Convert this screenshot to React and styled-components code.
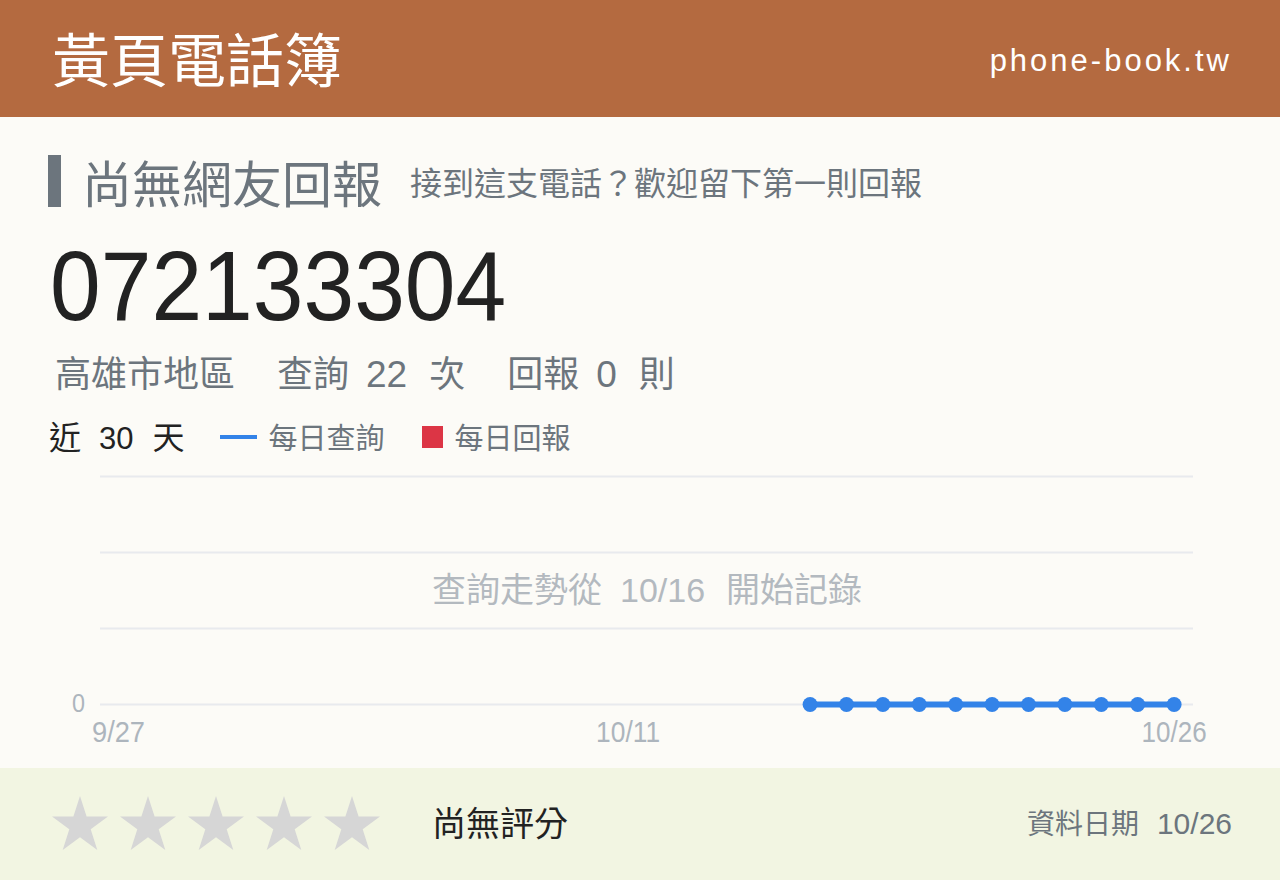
import styled, { createGlobalStyle } from 'styled-components';

const GlobalStyle = createGlobalStyle`
    html, body {
        margin: 0;
        padding: 0;
        background: #fcfbf7;
    }
    body {
        font-family: "Noto Sans CJK TC", "Liberation Sans", sans-serif;
        color: #222;
    }
`;

const Page = styled.div`
    width: 1280px;
    height: 880px;
    display: flex;
    flex-direction: column;
    overflow: hidden;
`;

const Header = styled.header`
    height: 117px;
    flex-shrink: 0;
    background: #b46a40;
    color: #fff;
    display: flex;
    align-items: center;
    justify-content: space-between;
    padding: 0 48px 0 52px;
    box-sizing: border-box;
`;

const Brand = styled.div`
    font-size: 58px;
    line-height: 1;
    margin-top: -3px;
`;

const Domain = styled.div`
    font-family: "Liberation Sans", Arial, sans-serif;
    font-size: 31px;
    letter-spacing: 3px;
    margin-top: 4px;
`;

const Main = styled.main`
    flex: 1;
    min-height: 0;
    padding: 38px 48px 0;
    display: flex;
    flex-direction: column;
`;

const TitleRow = styled.div`
    display: flex;
    align-items: center;
    color: #6c757d;
`;

const TitleBar = styled.span`
    width: 13px;
    height: 52px;
    background: #6c757d;
`;

const Title = styled.h1`
    margin: 0 0 0 21px;
    font-size: 50px;
    font-weight: 400;
    line-height: 1;
`;

const TitleNote = styled.span`
    margin-left: 28px;
    font-size: 32px;
    line-height: 1;
`;

// phone number digits are set a little narrower than the stock face
const Number = styled.div`
    margin-top: 30px;
    font-family: "Liberation Sans", Arial, sans-serif;
    font-size: 98px;
    line-height: 1;
    color: #222;
    transform: scaleX(0.93);
    transform-origin: left center;
    margin-left: 2px;
`;

const Stats = styled.div`
    margin-top: 18px;
    display: flex;
    gap: 42px;
    color: #6c757d;
    font-size: 36px;
    line-height: 1;
    padding-left: 7px;
`;

const Stat = styled.span`
    display: flex;
    align-items: baseline;
`;

const Count = styled.span`
    font-family: "Liberation Sans", Arial, sans-serif;
    font-size: 37px;
    padding: 0 22px 0 17px;
`;

const LegendRow = styled.div`
    margin-top: 26px;
    display: flex;
    align-items: center;
    line-height: 1;
`;

const Period = styled.span`
    display: flex;
    align-items: baseline;
    color: #222;
    font-size: 32px;
    margin-left: 1px;
    margin-right: 35px;
`;

const PeriodNum = styled.span`
    font-family: "Liberation Sans", Arial, sans-serif;
    font-size: 31px;
    padding: 0 19px 0 18px;
`;

const LegendItem = styled.span`
    display: flex;
    align-items: center;
    color: #6c757d;
    font-size: 29px;
    margin-right: 37px;
`;

const Swatch = styled.span`
    display: inline-block;
    width: ${p => (p.$line ? '37px' : '21px')};
    height: ${p => (p.$line ? '4px' : '22px')};
    background: ${p => p.$color};
    margin-right: 12px;
`;

const ChartBox = styled.div`
    margin: 12px 0 0 -48px;
    line-height: 0;
`;

const Footer = styled.footer`
    height: 112px;
    flex-shrink: 0;
    background: #f2f5e2;
    display: flex;
    align-items: center;
    padding: 0 48px 5px 52px;
    box-sizing: border-box;
`;

const Stars = styled.div`
    display: flex;
    gap: 12px;
    margin-top: 2px;
`;

const Rating = styled.span`
    margin-left: 52px;
    font-size: 34px;
    color: #222;
`;

const DataDate = styled.div`
    margin-left: auto;
    color: #6c757d;
    font-size: 28px;
    display: flex;
    align-items: baseline;
`;

const DateNum = styled.span`
    font-family: "Liberation Sans", Arial, sans-serif;
    font-size: 30px;
    margin-left: 18px;
`;

const Star = () => (
    <svg width="56" height="54" viewBox="0 0 56 54">
        <path d="M28 0 L34.6 20.5 L56 20.6 L38.7 33.3 L45.3 54 L28 41.3 L10.7 54 L17.3 33.3 L0 20.6 L21.4 20.5 Z" fill="#d6d6d6" />
    </svg>
);

const LABEL_FONT = 'Liberation Sans, Arial, sans-serif';

// x positions of the 30 days, 9/27 .. 10/26
const dayX = (i) => 118.5 + i * 36.4;
const recorded = Array.from({length: 11}, (_, i) => dayX(19 + i));

const axisLabels = [
    {day: 0, text: '9/27', width: 53},
    {day: 14, text: '10/11', width: 64},
    {day: 29, text: '10/26', width: 65},
];

const TrendChart = () => (
    <svg width="1280" height="282" viewBox="0 466 1280 282">
        {[476, 552, 628, 704].map(y => (
            <line key={y} x1="100" x2="1193" y1={y + 0.5} y2={y + 0.5} stroke="#e8eaee" strokeWidth="2" />
        ))}
        <text x="72" y="712" fontSize="26" fill="#adb5bd" fontFamily={LABEL_FONT}
              textLength="13" lengthAdjust="spacingAndGlyphs">0</text>
        {axisLabels.map(({day, text, width}) => (
            <text key={text} x={dayX(day) - width / 2} y="742" fontSize="30" fill="#adb5bd"
                  fontFamily={LABEL_FONT} textLength={width} lengthAdjust="spacingAndGlyphs">{text}</text>
        ))}
        <text x="432" y="602" fontSize="34" fill="#b3b9bf" fontFamily="Noto Sans CJK TC, sans-serif">
            查詢走勢從
            <tspan x="620" fontFamily={LABEL_FONT}>10/16</tspan>
            <tspan x="726">開始記錄</tspan>
        </text>
        <polyline points={recorded.map(x => `${x},704.5`).join(' ')} fill="none" stroke="#3383e8" strokeWidth="6" />
        {recorded.map(x => (
            <circle key={x} cx={x} cy="704.5" r="7.5" fill="#3383e8" />
        ))}
    </svg>
);

const App = () => {
    return (
        <Page>
            <GlobalStyle />
            <Header>
                <Brand>黃頁電話簿</Brand>
                <Domain>phone-book.tw</Domain>
            </Header>
            <Main>
                <TitleRow>
                    <TitleBar />
                    <Title>尚無網友回報</Title>
                    <TitleNote>接到這支電話？歡迎留下第一則回報</TitleNote>
                </TitleRow>
                <Number>072133304</Number>
                <Stats>
                    <Stat>高雄市地區</Stat>
                    <Stat>查詢<Count>22</Count>次</Stat>
                    <Stat>回報<Count>0</Count>則</Stat>
                </Stats>
                <LegendRow>
                    <Period>近<PeriodNum>30</PeriodNum>天</Period>
                    <LegendItem><Swatch $line $color="#3383e8" />每日查詢</LegendItem>
                    <LegendItem><Swatch $color="#dc3545" />每日回報</LegendItem>
                </LegendRow>
                <ChartBox>
                    <TrendChart />
                </ChartBox>
            </Main>
            <Footer>
                <Stars>
                    {[0, 1, 2, 3, 4].map(i => <Star key={i} />)}
                </Stars>
                <Rating>尚無評分</Rating>
                <DataDate>資料日期<DateNum>10/26</DateNum></DataDate>
            </Footer>
        </Page>
    );
};

export default App;
